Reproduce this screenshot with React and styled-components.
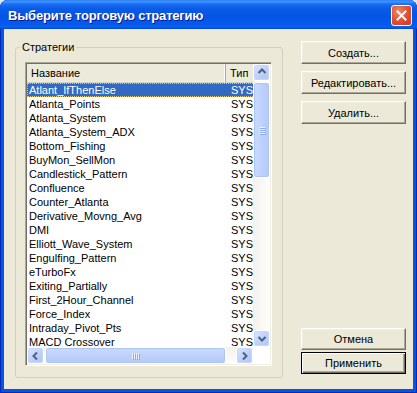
import React from 'react';
import styled, { createGlobalStyle, css } from 'styled-components';

const strategies = [
  'Atlant_IfThenElse',
  'Atlanta_Points',
  'Atlanta_System',
  'Atlanta_System_ADX',
  'Bottom_Fishing',
  'BuyMon_SellMon',
  'Candlestick_Pattern',
  'Confluence',
  'Counter_Atlanta',
  'Derivative_Movng_Avg',
  'DMI',
  'Elliott_Wave_System',
  'Engulfing_Pattern',
  'eTurboFx',
  'Exiting_Partially',
  'First_2Hour_Channel',
  'Force_Index',
  'Intraday_Pivot_Pts',
  'MACD Crossover',
];

const GlobalStyle = createGlobalStyle`
  html, body {
    margin: 0;
    padding: 0;
    background: #dfe6f2;
  }
  * { box-sizing: border-box; }
`;

const Window = styled.div`
  width: 417px;
  height: 393px;
  display: flex;
  flex-direction: column;
  background: #0855dd;
  border-radius: 8px 8px 0 0;
  box-shadow: inset 1px 0 #0029b8, inset -1px 0 #0029b8, inset 0 -1px #0029b8;
  font-family: "Liberation Sans", Arial, sans-serif;
`;

const TitleBar = styled.div`
  height: 29px;
  flex: none;
  display: flex;
  align-items: flex-start;
  justify-content: space-between;
  padding: 5px 5px 0 8px;
  border-radius: 8px 8px 0 0;
  background: linear-gradient(180deg, #2f7ef4 0%, #3d95ff 6%, #1a6ef2 14%, #0a5be6 30%, #0455e4 55%, #0559ec 85%, #0a62f2 92%, #0048d6 100%);
`;

const Title = styled.span`
  color: #fff;
  font-weight: bold;
  font-size: 13px;
  letter-spacing: -0.2px;
  line-height: 21px;
  text-shadow: 1px 1px #0a1a8f;
`;

const CloseButton = styled.div`
  width: 21px;
  height: 21px;
  border: 1px solid #fff;
  border-radius: 3px;
  background: radial-gradient(circle at 35% 30%, #f08a6c 0%, #e2553a 45%, #c9381c 100%);
  display: flex;
  align-items: center;
  justify-content: center;
`;

const Body = styled.div`
  flex: 1;
  min-height: 0;
  overflow: hidden;
  margin: 0 4px 4px;
  background: #ece9d8;
  display: flex;
  gap: 18px;
  padding: 12px 7px 11px 11px;
  font-size: 11px;
  color: #000;
`;

const Group = styled.fieldset`
  margin: 0;
  width: 268px;
  min-width: 0;
  min-height: 0;
  flex: none;
  border: 1px solid #d0d0bf;
  border-radius: 3px;
  padding: 8px 10px 11px 9px;
  display: flex;
  flex-direction: column;
`;

const Legend = styled.legend`
  padding: 0 2px;
  margin-left: -5px;
  font-size: 11px;
  line-height: 13px;
`;

const ListView = styled.div`
  flex: 1;
  min-height: 0;
  display: flex;
  flex-direction: column;
  background: #fff;
  border: 1px solid;
  border-color: #aca899 #fff #fff #aca899;
  box-shadow: inset 1px 1px #716f64, inset -1px -1px #f1efe2;
  padding: 1px;
  overflow: hidden;
`;

const ListMain = styled.div`
  flex: 1;
  display: flex;
  min-height: 0;
`;

const Content = styled.div`
  flex: 1;
  min-width: 0;
  display: flex;
  flex-direction: column;
  overflow: hidden;
`;

const HeaderRow = styled.div`
  height: 19px;
  flex: none;
  display: flex;
  background: #ebeadb;
  border-bottom: 1px solid #d6d2c2;
`;

const HeaderCell = styled.div`
  flex: none;
  width: ${p => p.$w}px;
  line-height: 18px;
  padding-left: ${p => p.$pad}px;
  border-right: 1px solid #aca899;
  box-shadow: inset -1px 0 #fff;
  white-space: nowrap;
`;

const Rows = styled.div`
  flex: 1;
  min-height: 0;
  overflow: hidden;
`;

const Row = styled.div`
  display: flex;
  width: 260px;
  height: 14px;
  line-height: 14px;
  white-space: nowrap;
  ${p => p.$selected && css`
    background: #316ac5;
    color: #fff;
    outline: 1px dotted #e8c46a;
    outline-offset: -1px;
  `}
`;

const Cell = styled.div`
  flex: none;
  width: ${p => p.$w}px;
  padding-left: ${p => p.$pad}px;
  overflow: hidden;
`;

const VScroll = styled.div`
  width: 17px;
  flex: none;
  display: flex;
  flex-direction: column;
  background: linear-gradient(90deg, #f3f1ec, #fefefb);
`;

const HScrollRow = styled.div`
  height: 17px;
  flex: none;
  display: flex;
`;

const HScroll = styled.div`
  flex: 1;
  display: flex;
  background: linear-gradient(180deg, #f3f1ec, #fefefb);
`;

const Corner = styled.div`
  width: 17px;
  flex: none;
  background: #fff;
`;

const Arrow = styled.div`
  width: 17px;
  height: 17px;
  flex: none;
  border: 1px solid #fff;
  border-radius: 3px;
  background: linear-gradient(135deg, #dbe5fd, #bccffa 60%, #b0c6f7);
  box-shadow: inset 0 0 0 1px #c6d6fb;
  display: flex;
  align-items: center;
  justify-content: center;
`;

const Thumb = styled.div`
  flex: none;
  border: 1px solid #fff;
  border-radius: 3px;
  background: ${p => p.$vertical
    ? 'linear-gradient(90deg, #cadafd, #bdd0fb 60%, #b4c9f8)'
    : 'linear-gradient(180deg, #cadafd, #bdd0fb 60%, #b4c9f8)'};
  box-shadow: inset 0 0 0 1px #aec4f6;
  display: flex;
  align-items: center;
  justify-content: center;
  ${p => p.$vertical
    ? css`height: 96px; margin-top: 1px;`
    : css`width: 181px; margin-left: 1px;`}
`;

const Grip = styled.div`
  display: flex;
  flex-direction: ${p => p.$vertical ? 'column' : 'row'};
  gap: 1px;
  & > span {
    display: block;
    background: #eef3fe;
    box-shadow: 1px 1px #8faaf0;
    ${p => p.$vertical ? css`width: 6px; height: 1px;` : css`width: 1px; height: 6px;`}
  }
`;

const Spacer = styled.div`
  flex: 1;
`;

const ButtonColumn = styled.div`
  width: 105px;
  flex: none;
  display: flex;
  flex-direction: column;
  gap: 7px;
  padding-bottom: 4px;
`;

const BottomButtons = styled.div`
  display: flex;
  flex-direction: column;
  gap: 2px;
`;

const Button = styled.button`
  height: ${p => p.$h || 23}px;
  width: 100%;
  flex: none;
  padding: 0;
  font-family: "Liberation Sans", Arial, sans-serif;
  font-size: 11px;
  color: #000;
  background: #ece9d8;
  border: 1px solid;
  border-color: #fff #716f64 #716f64 #fff;
  box-shadow: inset -1px -1px #aca899, inset 1px 1px #f1efe2;
  ${p => p.$default && css`
    border-color: #000;
    box-shadow: inset 1px 1px #fff, inset -1px -1px #716f64, inset -2px -2px #aca899;
  `}
`;

const Chevron = ({ dir }) => {
  const d = {
    up: 'M4.5 8 L8 4.5 L11.5 8',
    down: 'M4.5 6 L8 9.5 L11.5 6',
    left: 'M9 4.5 L5.5 8 L9 11.5',
    right: 'M6 4.5 L9.5 8 L6 11.5',
  }[dir];
  return (
    <svg width="15" height="15" viewBox="0 0 15 15">
      <path d={d} fill="none" stroke="#4d6185" strokeWidth="2" />
    </svg>
  );
};

const App = () => (
  <>
    <GlobalStyle />
    <Window>
      <TitleBar>
        <Title>Выберите торговую стратегию</Title>
        <CloseButton>
          <svg width="11" height="11" viewBox="0 0 11 11">
            <path d="M1.5 1.5 L9.5 9.5 M9.5 1.5 L1.5 9.5" stroke="#fff" strokeWidth="2" strokeLinecap="square" />
          </svg>
        </CloseButton>
      </TitleBar>
      <Body>
        <Group>
          <Legend>Стратегии</Legend>
          <ListView>
            <ListMain>
              <Content>
                <HeaderRow>
                  <HeaderCell $w={199} $pad={4}>Название</HeaderCell>
                  <HeaderCell $w={60} $pad={4}>Тип</HeaderCell>
                </HeaderRow>
                <Rows>
                  {strategies.map((name, i) => (
                    <Row key={name} $selected={i === 0}>
                      <Cell $w={199} $pad={2}>{name}</Cell>
                      <Cell $w={60} $pad={5}>SYS</Cell>
                    </Row>
                  ))}
                </Rows>
              </Content>
              <VScroll>
                <Arrow><Chevron dir="up" /></Arrow>
                <Thumb $vertical>
                  <Grip $vertical><span /><span /><span /><span /></Grip>
                </Thumb>
                <Spacer />
                <Arrow><Chevron dir="down" /></Arrow>
              </VScroll>
            </ListMain>
            <HScrollRow>
              <HScroll>
                <Arrow><Chevron dir="left" /></Arrow>
                <Thumb>
                  <Grip><span /><span /><span /><span /></Grip>
                </Thumb>
                <Spacer />
                <Arrow><Chevron dir="right" /></Arrow>
              </HScroll>
              <Corner />
            </HScrollRow>
          </ListView>
        </Group>
        <ButtonColumn>
          <Button>Создать...</Button>
          <Button>Редактировать...</Button>
          <Button>Удалить...</Button>
          <Spacer />
          <BottomButtons>
            <Button $h={22}>Отмена</Button>
            <Button $h={22} $default>Применить</Button>
          </BottomButtons>
        </ButtonColumn>
      </Body>
    </Window>
  </>
);

export default App;
